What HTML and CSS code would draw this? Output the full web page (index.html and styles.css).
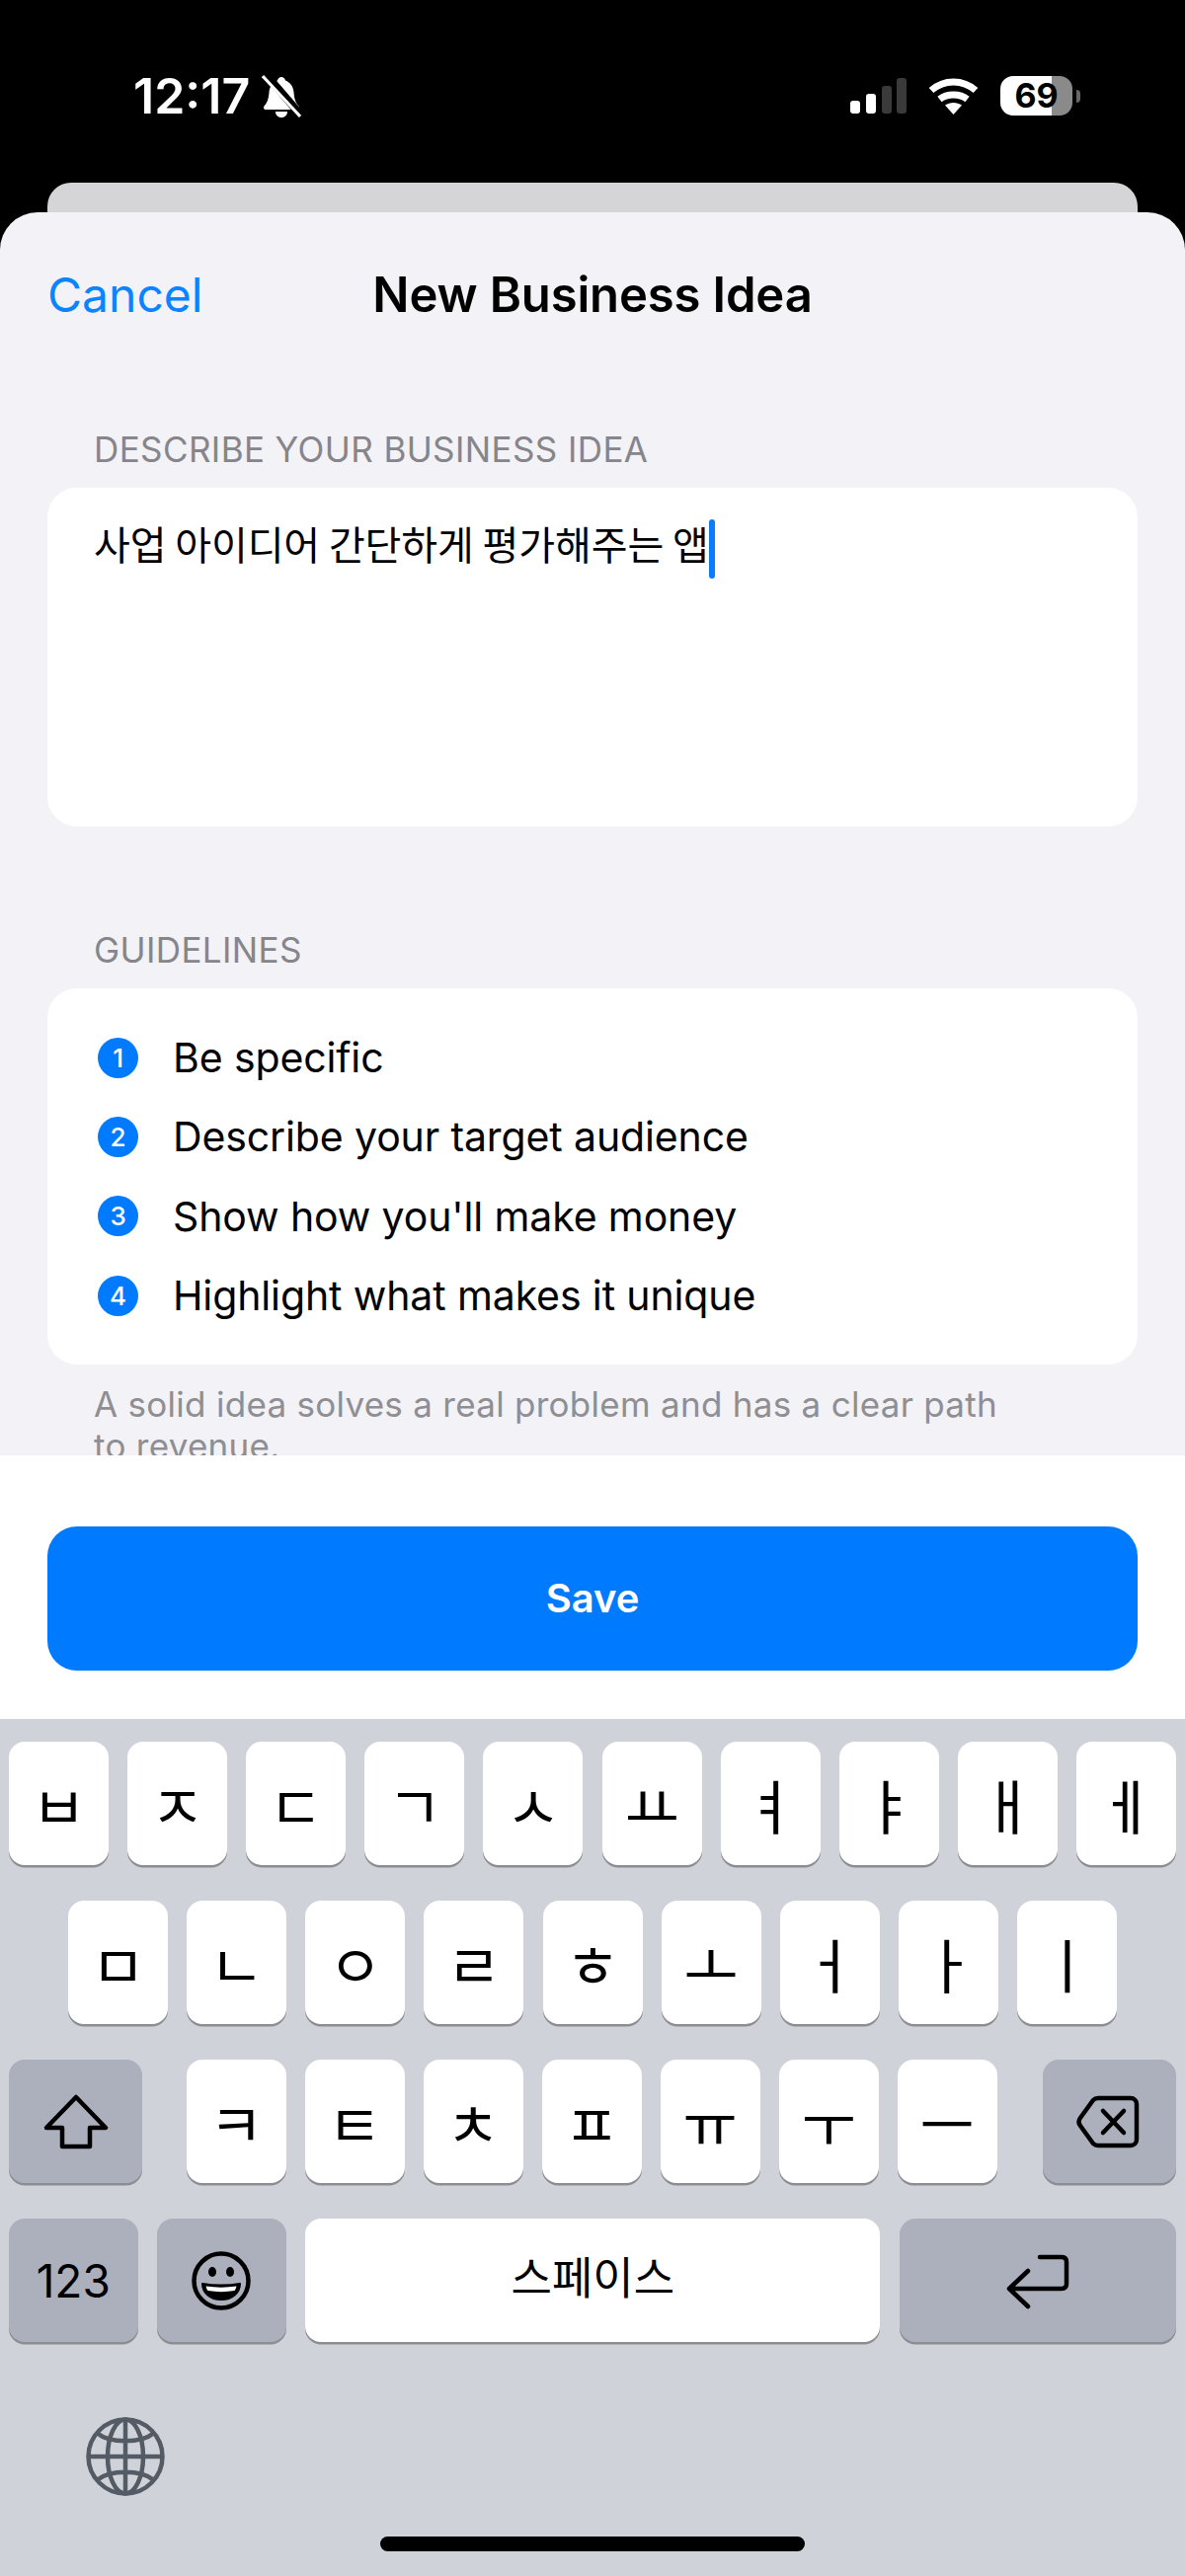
FILE: index.html
```html
<!DOCTYPE html>
<html lang="en">
<head>
    <meta charset="UTF-8">
    <meta name="viewport" content="width=device-width, initial-scale=1.0">
    <title>New Business Idea</title>
    <link rel="stylesheet" href="styles.css">
</head>
<body>
    <div class="statusbar">
        <div class="status-left">
            <span class="clock">12:17</span>
            <svg class="bell" viewBox="0 0 40 44" width="40" height="44">
                <path fill="#fff" d="M20 2c2 0 3.500 1.500 4 3.500 5 2 8 6 8.500 12 .5 6 1.500 10 5 14 1 1.500.5 3.500-2 3.500H4.500c-2.500 0-3-2-2-3.500 3.500-4 4.500-8 5-14 .5-6 3.500-10 8.500-12C16.500 3.500 18 2 20 2z"/>
                <path fill="#fff" d="M14 37h12c0 3.500-2.500 6-6 6s-6-2.500-6-6z"/>
                <path stroke="#000" stroke-width="8" d="M3 -2L41 42"/>
                <path stroke="#fff" stroke-width="3" d="M1 1L39 42"/>
            </svg>
        </div>
        <div class="status-right">
            <svg viewBox="0 0 57 36" width="57" height="36">
                <rect x="0" y="23" width="10" height="13" rx="3" fill="#fff"/>
                <rect x="16" y="16" width="10" height="20" rx="3" fill="#fff"/>
                <rect x="32" y="8" width="10" height="28" rx="3" fill="#3a3a3a"/>
                <rect x="47" y="0" width="10" height="36" rx="3" fill="#3a3a3a"/>
            </svg>
            <svg viewBox="0 0 51 37" width="51" height="37">
                <path fill="none" stroke="#fff" stroke-width="7" d="M3 12.500C16 1 35 1 48 12.500"/>
                <path fill="none" stroke="#fff" stroke-width="7" d="M11.500 21.500C19 15.500 32 15.500 39.500 21.500"/>
                <path fill="#fff" d="M17 27.500c5-3.500 12-3.500 17 0L25.500 37z"/>
            </svg>
            <div class="battery-wrap">
                <div class="battery">69</div>
                <div class="battery-cap"></div>
            </div>
        </div>
    </div>

    <div class="back-card"></div>

    <div class="sheet">
        <div class="nav">
            <span class="cancel">Cancel</span>
            <span class="title">New Business Idea</span>
            <span></span>
        </div>

        <div class="section-label">DESCRIBE YOUR BUSINESS IDEA</div>
        <div class="card editor">사업 아이디어 간단하게 평가해주는 앱<span class="caret"></span></div>

        <div class="section-label guide-label">GUIDELINES</div>
        <div class="card guide-list">
            <div class="guide-row"><span class="num">1</span>Be specific</div>
            <div class="guide-row"><span class="num">2</span>Describe your target audience</div>
            <div class="guide-row"><span class="num">3</span>Show how you'll make money</div>
            <div class="guide-row"><span class="num">4</span>Highlight what makes it unique</div>
        </div>
        <p class="footnote">A solid idea solves a real problem and has a clear path to revenue.</p>
    </div>

    <div class="save-panel">
        <div class="save-btn">Save</div>
    </div>

    <div class="keyboard">
        <div class="kb-row">
            <div class="key">ㅂ</div><div class="key">ㅈ</div><div class="key">ㄷ</div><div class="key">ㄱ</div><div class="key">ㅅ</div>
            <div class="key">ㅛ</div><div class="key">ㅕ</div><div class="key">ㅑ</div><div class="key">ㅐ</div><div class="key">ㅔ</div>
        </div>
        <div class="kb-row kb-row-mid">
            <div class="key">ㅁ</div><div class="key">ㄴ</div><div class="key">ㅇ</div><div class="key">ㄹ</div><div class="key">ㅎ</div>
            <div class="key">ㅗ</div><div class="key">ㅓ</div><div class="key">ㅏ</div><div class="key">ㅣ</div>
        </div>
        <div class="kb-row">
            <div class="key key-dark key-wide">
                <svg viewBox="0 0 66 56" width="66" height="56"><path fill="none" stroke="#000" stroke-width="4.500" stroke-linejoin="round" d="M33 3L63 34H47V53H19V34H3Z"/></svg>
            </div>
            <div class="kb-letters">
                <div class="key">ㅋ</div><div class="key">ㅌ</div><div class="key">ㅊ</div><div class="key">ㅍ</div>
                <div class="key">ㅠ</div><div class="key">ㅜ</div><div class="key">ㅡ</div>
            </div>
            <div class="key key-dark key-wide">
                <svg class="del-icon" viewBox="0 0 64 54" width="64" height="54">
                    <path fill="none" stroke="#000" stroke-width="4.500" stroke-linejoin="round" d="M22 3H55a6 6 0 0 1 6 6V45a6 6 0 0 1-6 6H22q-3 0-5-2L4 31q-3-4 0-8L17 5q2-2 5-2z"/>
                    <path fill="none" stroke="#000" stroke-width="4.500" stroke-linecap="round" d="M27 16L48 38M48 16L27 38"/>
                </svg>
            </div>
        </div>
        <div class="kb-row">
            <div class="key key-dark key-num">123</div>
            <div class="key key-dark key-num">
                <svg viewBox="0 0 60 60" width="60" height="60">
                    <circle cx="30" cy="30" r="27.500" fill="none" stroke="#000" stroke-width="4.500"/>
                    <ellipse cx="21" cy="21" rx="4" ry="5"/>
                    <ellipse cx="39" cy="21" rx="4" ry="5"/>
                    <path stroke="#000" stroke-width="2" stroke-linejoin="round" d="M11 33c12 2 26 2 38 0 0 9-8 16-19 16S11 42 11 33z"/>
                    <path fill="#fff" d="M14.500 35.500c10 1.500 21 1.500 31 0-.5 2-1 3-2 4.500-9 1.500-18 1.500-27 0-1-1.500-1.500-2.500-2-4.500z"/>
                </svg>
            </div>
            <div class="key key-space">스페이스</div>
            <div class="key key-dark key-return">
                <svg viewBox="0 0 64 58" width="64" height="58"><path fill="none" stroke="#000" stroke-width="4.500" stroke-linecap="round" stroke-linejoin="round" d="M34 5H56q5 0 5 5V32q0 5-5 5H3M22 19L3 37L22 55"/></svg>
            </div>
        </div>
        <svg class="globe" viewBox="0 0 80 80" width="80" height="80" fill="none" stroke="#555b64" stroke-width="4.500">
            <circle cx="40" cy="40" r="37.500"/>
            <ellipse cx="40" cy="40" rx="18" ry="37.500"/>
            <path d="M40 2V78M2 40H78M11 16C24 27 56 27 69 16M11 64C24 53 56 53 69 64"/>
        </svg>
        <div class="home-bar"></div>
    </div>
</body>
</html>
```

FILE: styles.css
```css
* { box-sizing: border-box; }
body { margin: 0; width: 1200px; height: 2609px; overflow: hidden; background: #000; font-family: Inter, "Noto Sans CJK KR", sans-serif; color: #000; }

.statusbar { height: 185px; padding: 72px 106px 0 135px; display: flex; justify-content: space-between; align-items: flex-start; }
.status-left { display: flex; align-items: center; height: 50px; gap: 12px; }
.clock { color: #fff; font-size: 50px; line-height: 50px; font-weight: 600; }
.bell { margin-top: 2px; }
.status-right { display: flex; align-items: center; height: 50px; gap: 22px; }
.battery-wrap { display: flex; align-items: center; gap: 4px; }
.battery { width: 73px; height: 40px; border-radius: 13px; background: linear-gradient(to right, #fff 71%, #8a8a8a 71%); font-size: 34px; font-weight: 700; line-height: 40px; text-align: center; }
.battery-cap { width: 4px; height: 13px; border-radius: 0 4px 4px 0; background: #666; }

.back-card { height: 30px; margin: 0 48px; background: #d5d5d8; border-radius: 24px 24px 0 0; }

.sheet { height: 1259px; padding: 0 48px; background: #f2f2f7; border-radius: 38px 38px 0 0; overflow: hidden; }
.nav { display: grid; grid-template-columns: 1fr auto 1fr; padding-top: 56px; margin-bottom: 108px; font-size: 48px; line-height: 56px; }
.cancel { color: #0a84ff; }
.title { font-size: 49px; font-weight: 600; letter-spacing: -0.15px; }
.section-label { margin: 0 47px 19px; font-size: 35px; line-height: 40px; letter-spacing: 0.4px; color: #85858b; }
.guide-label { margin-top: 105px; }
.card { background: #fff; border-radius: 30px; }
.editor { height: 343px; padding: 32px 47px 0; font-family: "Noto Sans CJK KR", sans-serif; font-size: 40px; line-height: 48px; letter-spacing: -0.1px; }
.caret { display: inline-block; width: 6px; height: 60px; vertical-align: top; background: #0a7aff; border-radius: 3px; }
.guide-list { padding: 30px 50px 30px 51px; }
.guide-row { display: flex; align-items: center; height: 80.33px; font-size: 41px; letter-spacing: -0.12px; }
.num { display: flex; align-items: center; justify-content: center; width: 41px; height: 41px; margin-right: 35px; border-radius: 50%; background: #007aff; color: #fff; font-size: 26px; font-weight: 500; }
.footnote { margin: 19px 100px 0 47px; font-size: 35px; line-height: 42px; letter-spacing: 0.28px; color: #8e8e93; }

.save-panel { height: 267px; padding: 72px 48px 0; background: #fff; }
.save-btn { height: 146px; border-radius: 30px; background: #007aff; color: #fff; font-size: 40px; font-weight: 600; line-height: 146px; text-align: center; }

.keyboard { height: 868px; padding-top: 23px; background: #cfd2d9; }
.kb-row { display: flex; justify-content: space-between; height: 125px; margin: 0 9px 36px; }
.kb-row-mid { margin: 0 69px 36px; }
.kb-letters { display: flex; gap: 19px; margin-right: 2px; }
.key { display: flex; align-items: center; justify-content: center; width: 101px; height: 125px; border-radius: 16px; background: #fff; box-shadow: 0 2.5px 0 #8c8d92; font-family: "Noto Sans CJK KR", sans-serif; font-size: 60px; }
.key-dark { background: #abb0bc; }
.key-wide { width: 135px; }
.del-icon { margin-right: 3px; }
.key-num { width: 130.500px; font-family: Inter, sans-serif; font-size: 46px; }
.key-space { width: 582px; font-size: 45px; padding-bottom: 10px; }
.key-return { width: 280px; }
.globe { display: block; margin: 76px 0 0 87px; }
.home-bar { width: 430px; height: 15px; margin: 41px auto 0; border-radius: 8px; background: #000; }
```
